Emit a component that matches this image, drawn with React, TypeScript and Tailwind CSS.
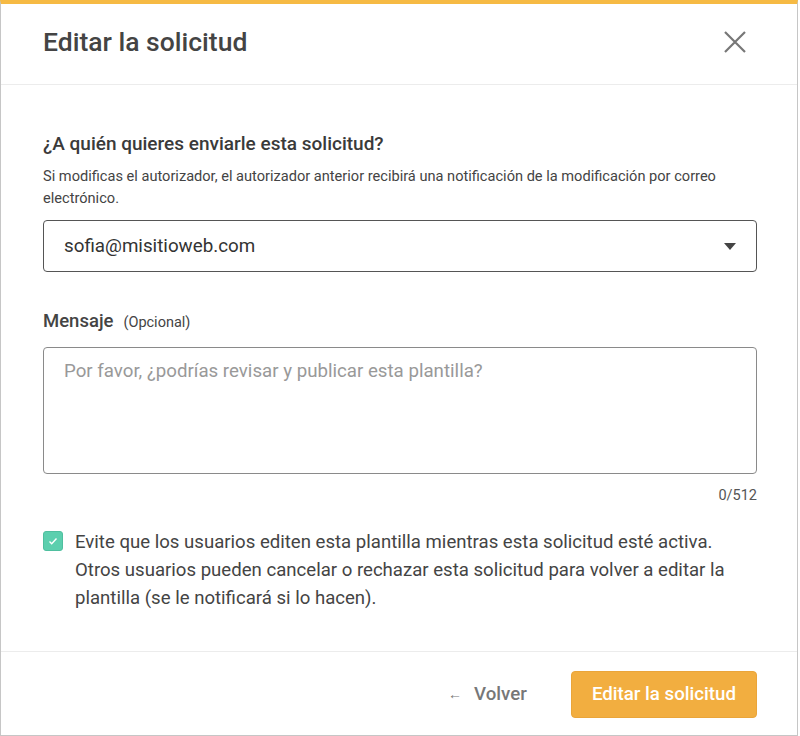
const font = { fontFamily: 'Roboto, "Liberation Sans", sans-serif' };

export default function App() {
  return (
    <div className="w-[800px] h-[736px] bg-white" style={font}>
      <div className="w-[798px] h-[736px] flex flex-col border-x border-b border-[#c6c6c6] border-t-4 border-t-[#f6ba44]">
        {/* Header */}
        <header className="h-[81px] flex items-center justify-between pl-[42px] pr-[50px] border-b border-[#ececec]">
          <h1 className="text-[26.5px] leading-[32px] font-medium text-[#444] pb-[4px]">Editar la solicitud</h1>
          <button className="text-[#777] pb-[4px]">
            <svg className="w-[24px] h-[24px]" viewBox="0 0 24 24" fill="none" stroke="currentColor" strokeWidth={2.2}>
              <path d="M2 2l20 20M22 2L2 22" />
            </svg>
          </button>
        </header>

        {/* Body */}
        <main className="flex-1 pl-[42px] pr-[40px] pt-[47px]">
          <h2 className="text-[19px] leading-[24px] font-medium text-[#3a3a3a]">
            ¿A quién quieres enviarle esta solicitud?
          </h2>
          <p className="mt-[9px] text-[14.6px] leading-[22px] text-[#444]">
            Si modificas el autorizador, el autorizador anterior recibirá una notificación de la modificación por correo
            electrónico.
          </p>
          <div className="mt-[11px] h-[52px] flex items-center justify-between px-[20px] border-[1.5px] border-[#555] rounded-[4px]">
            <span className="text-[18.8px] text-[#333]">sofia@misitioweb.com</span>
            <svg className="w-[12px] h-[7px]" viewBox="0 0 12 7">
              <path d="M0 0h12L6 7z" fill="#444" />
            </svg>
          </div>

          <div className="mt-[37px] flex items-baseline gap-[10px]">
            <span className="text-[18.5px] leading-[24px] font-medium text-[#444]">Mensaje</span>
            <span className="text-[14.5px] text-[#444]">(Opcional)</span>
          </div>
          <div className="mt-[13px] h-[127px] border border-[#8a8a8a] rounded-[4px] px-[20px] pt-[10px]">
            <span className="text-[18.7px] leading-[26px] text-[#999]">
              Por favor, ¿podrías revisar y publicar esta plantilla?
            </span>
          </div>
          <div className="mt-[13px] text-right text-[14.5px] leading-[18px] text-[#555]">0/512</div>

          <div className="mt-[23px] flex gap-[12px]">
            <div className="mt-[3px] w-[20px] h-[20px] shrink-0 rounded-[3px] bg-[#5ccfae] border border-[#4fbf9f] flex items-center justify-center">
              <svg className="w-[12px] h-[12px]" viewBox="0 0 12 12" fill="none" stroke="white" strokeWidth={1.4}>
                <path d="M2.5 6.5l2.2 2.2L9.5 3.5" />
              </svg>
            </div>
            <p className="text-[18.6px] leading-[28px] text-[#444]">
              Evite que los usuarios editen esta plantilla mientras esta solicitud esté activa. Otros usuarios pueden
              cancelar o rechazar esta solicitud para volver a editar la plantilla (se le notificará si lo hacen).
            </p>
          </div>
        </main>

        {/* Footer */}
        <footer className="h-[84px] flex items-center justify-end gap-[44px] pl-[42px] pr-[40px] pt-[2px] border-t border-[#ececec]">
          <button className="flex items-center gap-[12px] text-[18.7px] font-medium text-[#777]">
            <span className="text-[14px]">←</span>
            Volver
          </button>
          <button className="h-[47px] px-[20px] rounded-[4px] bg-[#f2ae40] border border-[#eaa53a] text-white text-[18.7px] font-medium">
            Editar la solicitud
          </button>
        </footer>
      </div>
    </div>
  );
}
